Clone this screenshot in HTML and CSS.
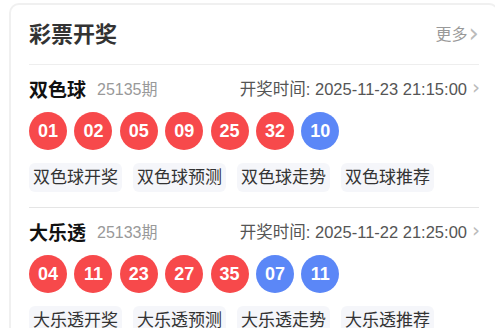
FILE: index.html
```html
<!DOCTYPE html>
<html lang="zh-CN">
<head>
    <meta charset="UTF-8">
    <title>彩票开奖</title>
    <link rel="stylesheet" href="styles.css">
</head>
<body>

    <div class="card">
        <div class="card-head">
            <h2>彩票开奖</h2>
            <a class="more" href="#">更多<span class="arrow">&#x203A;</span></a>
        </div>

        <div class="lottery">
            <div class="info">
                <span class="name">双色球</span>
                <span class="issue">25135期</span>
                <span class="time">开奖时间: 2025-11-23 21:15:00<span class="arrow small">&#x203A;</span></span>
            </div>
            <div class="balls">
                <span class="ball red">01</span>
                <span class="ball red">02</span>
                <span class="ball red">05</span>
                <span class="ball red">09</span>
                <span class="ball red">25</span>
                <span class="ball red">32</span>
                <span class="ball blue">10</span>
            </div>
            <div class="tags">
                <a class="tag" href="#">双色球开奖</a>
                <a class="tag" href="#">双色球预测</a>
                <a class="tag" href="#">双色球走势</a>
                <a class="tag" href="#">双色球推荐</a>
            </div>
        </div>

        <div class="lottery">
            <div class="info">
                <span class="name">大乐透</span>
                <span class="issue">25133期</span>
                <span class="time">开奖时间: 2025-11-22 21:25:00<span class="arrow small">&#x203A;</span></span>
            </div>
            <div class="balls">
                <span class="ball red">04</span>
                <span class="ball red">11</span>
                <span class="ball red">23</span>
                <span class="ball red">27</span>
                <span class="ball red">35</span>
                <span class="ball blue">07</span>
                <span class="ball blue">11</span>
            </div>
            <div class="tags">
                <a class="tag" href="#">大乐透开奖</a>
                <a class="tag" href="#">大乐透预测</a>
                <a class="tag" href="#">大乐透走势</a>
                <a class="tag" href="#">大乐透推荐</a>
            </div>
        </div>
    </div>

</body>
</html>
```
FILE: styles.css
```css
html, body {
    overflow: hidden;
}
body {
    font-family: "Liberation Sans", "Noto Sans CJK SC", sans-serif;
    background: #fff;
    margin: 0;
    padding: 3px 0 0 9px;
}
a {
    text-decoration: none;
}
.card {
    width: 490px;
    box-sizing: border-box;
    background: #fff;
    border: 2px solid #f0f0f0;
    border-radius: 10px;
    padding: 0 18px;
}
.card-head {
    display: flex;
    align-items: center;
    justify-content: space-between;
    height: 59px;
    border-bottom: 1px solid #eee;
}
.card-head h2 {
    margin: 0;
    font-size: 22px;
    line-height: 26px;
    font-weight: bold;
    color: #333;
}
.more {
    display: flex;
    align-items: center;
    font-size: 16px;
    line-height: 20px;
    color: #999;
    margin-right: 0;
}
.arrow {
    font-family: "DejaVu Sans", sans-serif;
    font-size: 26px;
    line-height: 20px;
    color: #bbb;
    margin-left: 1px;
    position: relative;
    top: -2px;
}
.arrow.small {
    font-size: 20px;
    margin-left: 5px;
    top: -1px;
}
.lottery {
    padding: 12px 0 15px;
    border-bottom: 1px solid #e5e5e5;
}
.info {
    display: flex;
    align-items: center;
    height: 22px;
}
.name {
    font-size: 19px;
    font-weight: bold;
    color: #111;
}
.issue {
    font-size: 16px;
    color: #999;
    margin-left: 11px;
}
.time {
    margin-left: auto;
    display: flex;
    align-items: center;
    font-size: 16.5px;
    color: #555;
    margin-right: -1px;
}
.balls {
    display: flex;
    gap: 7.4px;
    margin-top: 13px;
}
.ball {
    width: 38px;
    height: 38px;
    border-radius: 50%;
    display: flex;
    align-items: center;
    justify-content: center;
    color: #fff;
    font-size: 18px;
    font-weight: bold;
}
.ball.red {
    background: #f7494b;
}
.ball.blue {
    background: #5b87f7;
}
.tags {
    display: flex;
    gap: 11px;
    margin-top: 13px;
}
.tag {
    height: 29px;
    line-height: 29px;
    padding: 0 4px;
    background: #f5f6fa;
    border-radius: 6px;
    font-size: 17px;
    color: #333;
}
```
